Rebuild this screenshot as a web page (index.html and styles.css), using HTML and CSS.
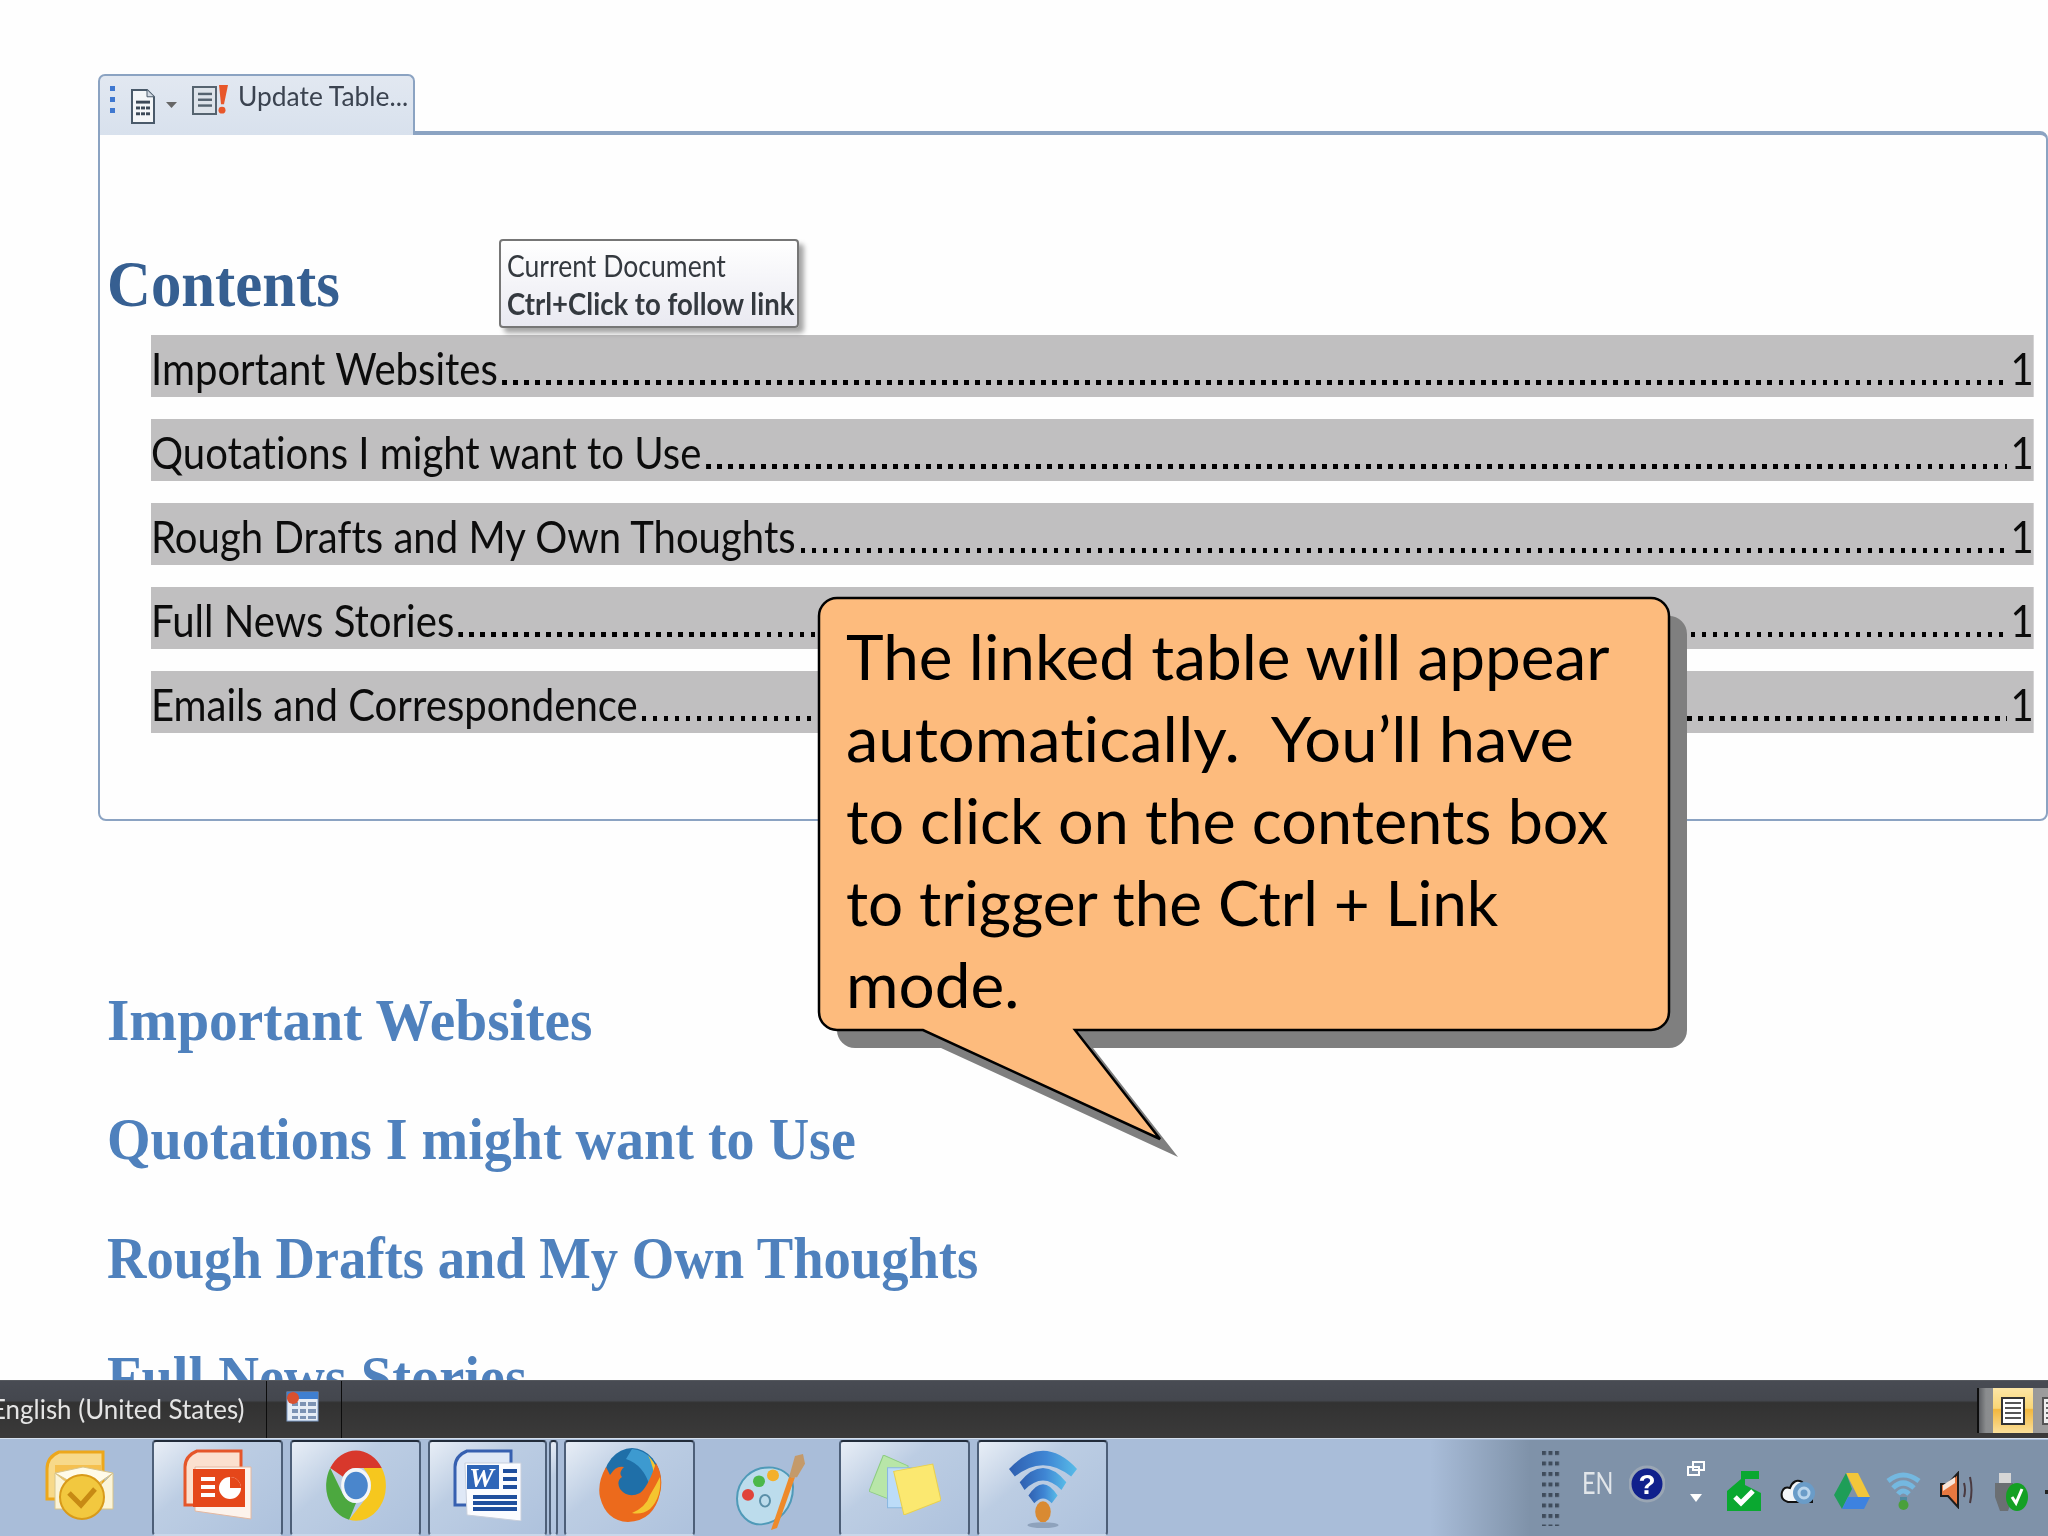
FILE: index.html
```html
<!DOCTYPE html>
<html lang="en">
<head>
<meta charset="utf-8">
<title>Linked table of contents</title>
<link rel="stylesheet" href="styles.css">
</head>
<body>
<main class="page">
  <div class="tab">
    <svg class="ic-grip" viewBox="0 0 6 28"><g fill="#3f78d0"><rect x="0" y="0" width="5" height="5"/><rect x="0" y="11" width="5" height="5"/><rect x="0" y="22" width="5" height="5"/></g></svg>
    <svg class="ic-doc" viewBox="0 0 24 36" preserveAspectRatio="none"><path d="M1 1H16L23 8V35H1Z" fill="#f4f6f8" stroke="#4a5a6a" stroke-width="2"/><path d="M16 1V8H23" fill="#d4dbe4" stroke="#4a5a6a"/><g fill="#3d4a58"><rect x="5" y="12" width="14" height="3"/><rect x="5" y="18" width="4" height="3"/><rect x="10" y="18" width="4" height="3"/><rect x="15" y="18" width="4" height="3"/><rect x="5" y="24" width="4" height="3"/><rect x="10" y="24" width="4" height="3"/><rect x="15" y="24" width="4" height="3"/></g></svg>
    <svg class="ic-drop" viewBox="0 0 11 6"><path d="M0 0H11L5.500 6Z" fill="#666"/></svg>
    <svg class="ic-update" viewBox="0 0 37 32" preserveAspectRatio="none"><path d="M1 3H24V31H1Z" fill="#dde3ea" stroke="#55636f" stroke-width="2"/><g fill="#55636f"><rect x="6" y="9" width="14" height="2.500"/><rect x="6" y="15" width="14" height="2.500"/><rect x="6" y="21" width="14" height="2.500"/></g><path d="M27 1H36L32 21H29Z" fill="#e8572a"/><circle cx="30" cy="27" r="3.500" fill="#e8572a"/></svg>
    <span class="tab-label">Update Table...</span>
  </div>
  <section class="frame">
    <h2 class="toc-title"><span>Contents</span></h2>
    <ul class="toc">
      <li class="row"><span>Important Websites</span><i class="dots"></i><span>1</span></li>
      <li class="row"><span>Quotations I might want to Use</span><i class="dots"></i><span>1</span></li>
      <li class="row"><span>Rough Drafts and My Own Thoughts</span><i class="dots"></i><span>1</span></li>
      <li class="row"><span>Full News Stories</span><i class="dots"></i><span>1</span></li>
      <li class="row"><span>Emails and Correspondence</span><i class="dots"></i><span>1</span></li>
    </ul>
  </section>
  <div class="sections">
    <h2 class="sec-a"><span>Important Websites</span></h2>
    <h2 class="sec-b"><span>Quotations I might want to Use</span></h2>
    <h2 class="sec-c"><span>Rough Drafts and My Own Thoughts</span></h2>
    <h2 class="sec-d"><span>Full News Stories</span></h2>
  </div>
  <div class="tooltip">
    <p class="tip-a"><span>Current Document</span></p>
    <p class="tip-b"><span>Ctrl+Click to follow link</span></p>
  </div>
  <aside class="callout">
    <svg class="callout-shape" viewBox="800 590 900 570">
      <path d="M837 598H1651a18 18 0 0 1 18 18V1012a18 18 0 0 1-18 18H1075L1160 1139 923 1030H837a18 18 0 0 1-18-18V616a18 18 0 0 1 18-18Z" transform="translate(18 18)" fill="#7f7f7f"/>
      <path d="M837 598H1651a18 18 0 0 1 18 18V1012a18 18 0 0 1-18 18H1075L1160 1139 923 1030H837a18 18 0 0 1-18-18V616a18 18 0 0 1 18-18Z" fill="#fdbb7d" stroke="#000" stroke-width="2.500"/>
    </svg>
    <div class="callout-text">
      <p class="line-a">The linked table will appear</p>
      <p class="line-b">automatically.&nbsp; You’ll have</p>
      <p class="line-c">to click on the contents box</p>
      <p class="line-d">to trigger the Ctrl + Link</p>
      <p class="line-a">mode.</p>
    </div>
  </aside>
</main>
<footer class="status">
  <div class="lang"><span>English (United States)</span></div>
  <div class="status-cell">
    <svg class="ic-table" viewBox="0 0 33 31" preserveAspectRatio="none"><rect x="1" y="1" width="31" height="29" fill="#e6edf6" stroke="#7e9cc8"/><rect x="1" y="1" width="31" height="7" fill="#3f7fd0"/><g fill="#7c93b4"><rect x="6" y="11" width="6" height="4"/><rect x="14" y="11" width="6" height="4"/><rect x="22" y="11" width="8" height="4"/><rect x="6" y="18" width="6" height="4"/><rect x="14" y="18" width="6" height="4"/><rect x="22" y="18" width="8" height="4"/><rect x="6" y="25" width="6" height="3"/><rect x="14" y="25" width="6" height="3"/><rect x="22" y="25" width="8" height="3"/></g><circle cx="7" cy="7" r="6" fill="#d9502e"/></svg>
  </div>
  <div class="views">
    <div class="view view-on"><svg class="ic-lines" viewBox="0 0 24 28" preserveAspectRatio="none"><rect x="1" y="1" width="22" height="26" fill="#fff" stroke="#333" stroke-width="2"/><g fill="#555"><rect x="4" y="5" width="16" height="2"/><rect x="4" y="10" width="16" height="2"/><rect x="4" y="15" width="16" height="2"/><rect x="4" y="20" width="16" height="2"/></g></svg></div>
    <div class="view"><svg class="ic-lines" viewBox="0 0 24 28" preserveAspectRatio="none"><rect x="1" y="1" width="22" height="26" fill="#eee" stroke="#555" stroke-width="2"/><g fill="#666"><rect x="4" y="5" width="16" height="2"/><rect x="4" y="10" width="16" height="2"/><rect x="4" y="15" width="16" height="2"/><rect x="4" y="20" width="16" height="2"/></g></svg></div>
  </div>
</footer>
<nav class="taskbar">
  <div class="slot slot-a">
    <svg class="t-icon" viewBox="0 0 70 72" preserveAspectRatio="none"><path d="M14 3H58V50H2V20Q2 8 14 3Z" fill="#f7d98a" stroke="#eda71b" stroke-width="3"/><path d="M10 16H56V34H10Z" fill="#f5c04f"/><path d="M10 24 42 50 68 24V60H10Z" fill="#fbf4d8" stroke="#d8c48a"/><path d="M10 24 38 18 68 24 42 42Z" fill="#fffbe9" stroke="#d8c48a"/><circle cx="37" cy="48" r="22" fill="#f2c83f" stroke="#d89a1a" stroke-width="2"/><path d="M24 44 36 56 50 40" fill="none" stroke="#c78a14" stroke-width="5"/></svg>
  </div>
  <div class="btn btn-131">
    <svg class="t-icon" viewBox="0 0 70 72" preserveAspectRatio="none"><path d="M14 2H58V56H2V18Q2 7 14 2Z" fill="#fbe0cf" stroke="#e5562a" stroke-width="3"/><path d="M12 18H68V70L12 62Z" fill="#fdf3ec" stroke="#e5b8a0"/><path d="M10 20H62V58H10Z" fill="#e5471a"/><g fill="#fff"><rect x="18" y="28" width="14" height="4"/><rect x="18" y="36" width="14" height="4"/><rect x="18" y="44" width="14" height="4"/></g><circle cx="47" cy="39" r="11" fill="#fff"/><path d="M47 39V28A11 11 0 0 1 58 39Z" fill="#e5471a"/></svg>
  </div>
  <div class="btn btn-131">
    <svg class="t-icon t-chrome" viewBox="0 0 100 100" preserveAspectRatio="none"><path d="M8.400 26A48 48 0 0 1 91.600 26H50A24 24 0 0 0 29 38Z" fill="#d8382c"/><path d="M8.400 26L29 62Q36 74 50 74L39 97A48 48 0 0 1 8.400 26Z" fill="#4ca83f"/><path d="M91.600 26H62Q74 38 74 50Q74 58 70 63L39 97A48 48 0 0 0 91.600 26Z" fill="#f6c71e"/><circle cx="50" cy="50" r="24" fill="#f4f6f8"/><circle cx="50" cy="50" r="19" fill="#4a86cc"/></svg>
  </div>
  <div class="btn btn-119">
    <svg class="t-icon" viewBox="0 0 70 72" preserveAspectRatio="none"><path d="M14 2H58V56H2V18Q2 7 14 2Z" fill="#dfe8f6" stroke="#3760b0" stroke-width="3"/><path d="M12 14H68V72L14 66Z" fill="#fbfcff" stroke="#c8cfdc"/><path d="M14 16H46V40H14Z" fill="#2f66b8"/><text class="w-glyph" x="16" y="38">W</text><g fill="#1f4f9e"><rect x="50" y="20" width="14" height="4"/><rect x="50" y="28" width="14" height="4"/><rect x="50" y="36" width="14" height="4"/><rect x="20" y="46" width="44" height="4"/><rect x="20" y="52" width="44" height="4"/><rect x="20" y="58" width="44" height="4"/></g></svg>
  </div>
  <div class="btn btn-9"></div>
  <div class="btn btn-131">
    <svg class="t-icon t-fox" viewBox="0 0 64 76" preserveAspectRatio="none"><ellipse cx="34" cy="36" rx="29" ry="35" fill="#1f6fa8"/><path d="M34 2Q58 4 62 36L52 40Q46 18 28 12Z" fill="#3d9ad0"/><path d="M50 8Q66 26 62 46 58 64 44 70 54 56 56 42 58 24 50 8Z" fill="#f4c530"/><path d="M58 16Q66 30 62 46 56 74 30 75 8 74 2 50 -1 36 8 20L12 28Q18 18 26 20 20 26 24 30 18 34 22 42 30 52 42 46 50 40 58 16Z" fill="#ec6a1c"/><path d="M62 30Q64 50 52 62 44 68 34 66 48 60 52 48 58 38 62 30Z" fill="#f4c530"/></svg>
  </div>
  <div class="slot slot-b">
    <svg class="t-icon t-paint" viewBox="0 0 72 80" preserveAspectRatio="none"><path d="M38 16C16 14 2 30 2 48 2 64 14 76 28 74 44 72 58 58 58 36 58 26 50 18 38 16Z" fill="#bcdcec" stroke="#4f9ab8" stroke-width="2"/><circle cx="24" cy="30" r="6" fill="#4cb84a"/><circle cx="38" cy="24" r="6" fill="#f4b02a"/><circle cx="13" cy="44" r="6" fill="#e0433a"/><ellipse cx="30" cy="50" rx="5" ry="6" fill="none" stroke="#5a8fa8" stroke-width="2"/><path d="M54 26 36 80 42 78 60 26Z" fill="#ee8a2a"/><path d="M54 26 60 4 68 2 70 12 62 26Z" fill="#c49a6a"/></svg>
  </div>
  <div class="btn btn-131">
    <svg class="t-icon t-notes" viewBox="0 0 70 66" preserveAspectRatio="none"><path d="M14 0 38 12 32 54 0 40Z" fill="#b8e6a8" stroke="#8ccc80"/><path d="M18 14H50V58H18Z" fill="#bcdcf8" stroke="#8ab8e0"/><path d="M24 18 62 10 70 50 34 66Z" fill="#fbe870" stroke="#e8d050"/></svg>
  </div>
  <div class="btn btn-131">
    <svg class="t-icon t-wifi" viewBox="0 0 70 84" preserveAspectRatio="none"><defs><linearGradient id="wifiblue" x1="0" x2="1" y1="0" y2="0"><stop offset="0" stop-color="#2f5fb0"/><stop offset=".55" stop-color="#3f86d4"/><stop offset="1" stop-color="#58bce8"/></linearGradient></defs><g fill="url(#wifiblue)"><path d="M0 22Q35 -16 70 22L64 30Q35 6 6 30Z"/><path d="M11 36Q35 6 59 36L54 44Q35 24 16 44Z"/><path d="M20 50Q35 26 50 50L44 58Q35 48 26 58Z"/></g><ellipse cx="35" cy="67" rx="8" ry="11" fill="#d98a32"/><ellipse cx="35" cy="81" rx="16" ry="3" fill="#8ea2bc"/></svg>
  </div>
  <div class="tray">
    <svg class="ic-trip" viewBox="0 0 19 75"><defs><pattern id="gripdots" width="6.500" height="10.500" patternUnits="userSpaceOnUse"><rect width="4" height="4" fill="#3f4c5c"/></pattern></defs><rect width="19" height="75" fill="url(#gripdots)"/></svg>
    <span class="en">EN</span>
    <svg class="tr tr-help" viewBox="0 0 36 38" preserveAspectRatio="none"><circle cx="18" cy="19" r="17" fill="#10208c" stroke="#9aa6b4" stroke-width="3"/><text class="q-glyph" x="18" y="29" text-anchor="middle">?</text></svg>
    <div class="tr-stack">
      <svg class="tr-win" viewBox="0 0 18 16"><path d="M6 1H17V9H6ZM1 6H12V14H1Z" fill="none" stroke="#fff" stroke-width="2"/></svg>
      <svg class="tr-up" viewBox="0 0 12 8"><path d="M0 0H12L6 8Z" fill="#fff"/></svg>
    </div>
    <svg class="tr tr-flag" viewBox="0 0 36 40" preserveAspectRatio="none"><path d="M0 40V20L14 8V0H32V8H18V14L34 22V40Z" fill="#0aa830"/><path d="M8 26 14 32 26 20" fill="none" stroke="#fff" stroke-width="5"/></svg>
    <svg class="tr tr-cloud" viewBox="0 0 36 28" preserveAspectRatio="none"><path d="M8 26Q0 24 2 16 4 10 10 12 14 2 22 6 28 10 24 16H32V26Z" fill="#f4f6f8" stroke="#111" stroke-width="2"/><circle cx="24" cy="17" r="11" fill="#6a9cc8"/><circle cx="24" cy="17" r="5" fill="none" stroke="#b8d4ec" stroke-width="3"/></svg>
    <svg class="tr tr-drive" viewBox="0 0 36 36" preserveAspectRatio="none"><path d="M12 0H24L36 24H24Z" fill="#f2c63a"/><path d="M12 0 0 22 8 36 18 16Z" fill="#1e9e58"/><path d="M8 36H30L36 24H14Z" fill="#3d82e0"/></svg>
    <svg class="tr tr-wifi" viewBox="0 0 35 40" preserveAspectRatio="none"><g fill="none" stroke="#74b8e0" stroke-width="5"><path d="M2 10Q17 -2 33 10"/><path d="M7 17Q17 7 28 17"/><path d="M12 23Q17 17 23 23"/></g><rect x="14" y="26" width="7" height="8" fill="#4e8a9e"/><circle cx="17.500" cy="34" r="5" fill="#4aa03a"/></svg>
    <svg class="tr tr-speak" viewBox="0 0 33 38" preserveAspectRatio="none"><path d="M1 13H8L18 2V36L8 25H1Z" fill="#e87840" stroke="#1d1d1d" stroke-width="2"/><path d="M3 14 15 6V12L3 20Z" fill="#f8e6da"/><path d="M24 12Q26 19 24 26M30 6Q33 19 30 32" fill="none" stroke="#4a3a40" stroke-width="2"/></svg>
    <svg class="tr tr-usb" viewBox="0 0 35 38" preserveAspectRatio="none"><rect x="6" y="0" width="12" height="10" fill="#d6d6d6"/><path d="M2 10H20V24L15 38H7L2 24Z" fill="#6b6f73"/><ellipse cx="24" cy="24" rx="11" ry="14" fill="#14a024"/><path d="M19 24 23 30 29 16" fill="none" stroke="#fff" stroke-width="3"/></svg>
    <i class="tr-dot"></i>
  </div>
</nav>
</body>
</html>
```
FILE: styles.css
```css
* { box-sizing: border-box; }
html, body { margin: 0; padding: 0; }
body {
  width: 2048px;
  height: 1536px;
  overflow: hidden;
  display: flex;
  flex-direction: column;
  background: #fff;
  font-family: "Lato", "Liberation Sans", sans-serif;
  font-variant-ligatures: none;
}

/* Document */
.page {
  position: relative;
  height: 1381px;
  overflow: hidden;
  padding: 74px 0 0 98px;
  background: #fefefe;
  border-bottom: 1px solid #55585e;
  filter: blur(.4px);
}
.tab {
  position: relative;
  z-index: 1;
  display: flex;
  align-items: center;
  width: 317px;
  height: 61px;
  margin-bottom: -4px;
  padding: 0 0 12px 10px;
  background: linear-gradient(#e2e8f1, #d8e1ed);
  border: 2px solid #8ba3c2;
  border-bottom: 0;
  border-radius: 7px 7px 0 0;
}
.ic-grip { width: 6px; height: 28px; margin-right: 15px; }
.ic-doc { width: 24px; height: 35px; margin: 14px 11px 0 0; }
.ic-drop { width: 11px; height: 6px; margin: 10px 15px 0 0; }
.ic-update { width: 37px; height: 31px; margin-right: 9px; }
.tab-label {
  margin-bottom: 7px;
  font-size: 26px;
  color: #3b4350;
  white-space: nowrap;
  transform: scaleX(1.015);
  transform-origin: left;
}
.frame {
  width: 1950px;
  height: 690px;
  padding: 111px 0 0 7px;
  border: 2px solid #8ba3c2;
  border-top-width: 4px;
  border-radius: 0 8px 8px 8px;
}
.toc-title, .sections h2 {
  margin: 0;
  font-family: "Liberation Serif", serif;
  font-weight: 700;
  white-space: nowrap;
}
.toc-title span, .sections span {
  display: inline-block;
  transform-origin: left;
}
.toc-title {
  height: 76px;
  margin-bottom: 13px;
  font-size: 65px;
  line-height: 76px;
  color: #365f91;
}
.toc-title span { transform: scaleX(.935); }
.toc {
  display: flex;
  flex-direction: column;
  gap: 22px;
  width: 2113px;
  margin: 0 0 0 44px;
  padding: 0;
  list-style: none;
  transform: scaleX(.891);
  transform-origin: left;
}
.row {
  display: flex;
  align-items: baseline;
  height: 62px;
  padding-top: 4px;
  background: #c0bfc0;
  font-size: 45px;
  line-height: 58px;
  color: #0c0c0c;
  white-space: nowrap;
}
.dots {
  flex: 1;
  height: 5px;
  margin: 0 4px 0 5px;
  background: repeating-linear-gradient(90deg, #000 0 5px, transparent 5px 12.350px);
}
.sections { margin: 140px 0 0 9px; }
.sections h2 {
  height: 119px;
  font-size: 60px;
  line-height: 119px;
  color: #4f81bd;
}
.sec-a span { transform: scaleX(.957); }
.sec-b span { transform: scaleX(.934); }
.sec-c span { transform: scaleX(.91); }
.sec-d span { transform: scaleX(.94); }

/* Hover tooltip */
.tooltip {
  position: absolute;
  left: 499px;
  top: 239px;
  width: 300px;
  height: 89px;
  padding: 5px 0 0 6px;
  background: linear-gradient(#fff, #e9e9f1);
  border: 2px solid #767676;
  border-radius: 4px;
  box-shadow: 5px 5px 5px rgba(0, 0, 0, .35);
  white-space: nowrap;
  color: #34393f;
  font-size: 30px;
  line-height: 38px;
}
.tooltip p { margin: 0; }
.tooltip span { display: inline-block; transform-origin: left; }
.tip-a span { transform: scaleX(.886); }
.tip-b { font-weight: 700; }
.tip-b span { transform: scaleX(.918); }

/* Speech bubble */
.callout {
  position: absolute;
  left: 800px;
  top: 590px;
  width: 900px;
  height: 570px;
}
.callout-shape { display: block; width: 900px; height: 570px; }
.callout-text {
  position: absolute;
  left: 46px;
  top: 25px;
  font-size: 62px;
  line-height: 82px;
  color: #000;
  white-space: nowrap;
}
.callout-text p { margin: 0; transform-origin: left; }
.line-a { transform: scaleX(1.03); }
.line-b { transform: scaleX(1.05); }
.line-c { transform: scaleX(1.014); }
.line-d { transform: scaleX(1); }

/* Office status bar */
.status {
  display: flex;
  height: 57px;
  overflow: hidden;
  background: linear-gradient(#484b53 0, #44474e 34%, #323232 38%, #3b3a3a 100%);
  color: #e4e4e4;
  filter: blur(.4px);
}
.lang {
  flex: 0 0 267px;
  font-size: 27px;
  line-height: 56px;
  white-space: nowrap;
  border-right: 1px solid #0c0c0c;
}
.lang span {
  display: inline-block;
  margin-left: -9px;
  transform: scaleX(.96);
  transform-origin: left;
}
.status-cell {
  flex: 0 0 75px;
  padding: 10px 0 0 19px;
  border-right: 1px solid #0c0c0c;
}
.ic-table { display: block; width: 33px; height: 31px; }
.views {
  display: flex;
  margin-left: auto;
  width: 71px;
  height: 45px;
  margin-top: 7px;
  padding-left: 14px;
  background: linear-gradient(90deg, #5c5e62, #8a8c8e 10%, #9d9d9d);
  border-left: 2px solid #0e0e0e;
}
.view {
  display: flex;
  align-items: center;
  justify-content: center;
  flex: 0 0 40px;
}
.view + .view { flex: 0 0 30px; justify-content: flex-start; padding-left: 9px; }
.view-on { background: linear-gradient(#fde6a6, #f9d676 45%, #f2b73e 48%, #fbe09a); }
.ic-lines { width: 24px; height: 28px; }

/* Windows taskbar */
.taskbar {
  display: flex;
  align-items: stretch;
  height: 98px;
  padding-top: 1px;
  background: #a9bdd9;
  border-top: 1px solid #d5e0ee;
  filter: blur(.4px);
}
.slot, .btn { display: flex; align-items: center; justify-content: center; flex-shrink: 0; }
.slot-a { flex: 0 0 152px; padding: 0 0 6px 8px; }
.slot-b { flex: 0 0 137px; padding-bottom: 2px; }
.btn {
  margin-right: 7px;
  padding-bottom: 6px;
  background: linear-gradient(140deg, #e8eef6 0, #bccde3 38%, #aec2dd 100%);
  border: 2px solid #4d5f78;
  border-top-color: #222c3a;
  border-bottom-color: #c9d7ea;
  border-radius: 4px;
}
.btn-131 { flex: 0 0 131px; }
.btn-119 { flex: 0 0 119px; margin-right: 2px; }
.btn-9 { flex: 0 0 9px; margin-right: 6px; }
.slot-b + .btn + .btn { margin-right: 0; }
.t-icon { flex: none; width: 70px; height: 72px; }
.t-chrome { width: 62px; height: 73px; }
.t-fox { width: 64px; height: 76px; }
.t-paint { width: 72px; height: 78px; margin-top: 8px; }
.t-notes { width: 72px; height: 60px; }
.t-wifi { width: 68px; height: 80px; margin-top: 6px; }
.w-glyph {
  font-family: "Liberation Serif", serif;
  font-style: italic;
  font-weight: 700;
  font-size: 28px;
  fill: #fff;
}
.tray {
  display: flex;
  flex: 0 0 618px;
  align-items: center;
  margin-left: auto;
  padding-left: 112px;
  background: linear-gradient(90deg, #a9bdd9 0, #7f92a9 100px);
}
.tray > * { flex: none; }
.ic-trip { width: 19px; height: 75px; margin-right: 21px; }
.en {
  width: 47px;
  margin-bottom: 12px;
  font-size: 30px;
  color: #e2e6ea;
  transform: scaleX(.78);
  transform-origin: left;
}
.tr-help { width: 36px; height: 38px; margin: 0 22px 8px 0; }
.q-glyph { font-family: "Liberation Sans", sans-serif; font-weight: 700; font-size: 28px; fill: #fff; }
.tr-stack { display: flex; flex-direction: column; align-items: center; gap: 17px; width: 18px; margin: 0 22px 14px 0; }
.tr-win { width: 18px; height: 16px; }
.tr-up { width: 12px; height: 8px; }
.tr-flag { width: 36px; height: 40px; margin: 6px 17px 0 0; }
.tr-cloud { width: 36px; height: 28px; margin: 4px 18px 0 0; }
.tr-drive { width: 36px; height: 36px; margin: 6px 16px 0 0; }
.tr-wifi { width: 35px; height: 40px; margin: 6px 19px 0 0; }
.tr-speak { width: 33px; height: 38px; margin: 4px 20px 0 0; }
.tr-usb { width: 35px; height: 38px; margin: 8px 17px 0 0; }
.tr-dot { width: 3px; height: 4px; margin-top: 8px; background: #222; }
```
